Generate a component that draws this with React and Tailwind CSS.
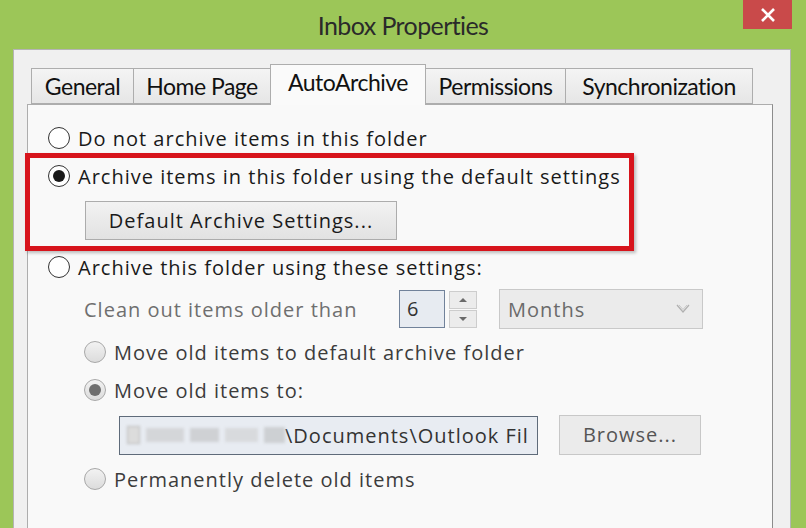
import React from 'react';

const font = "font-['Lato','Noto_Sans',sans-serif]";

function Radio({ checked, disabled }) {
  return (
    <div
      className={`w-[22px] h-[22px] rounded-full border-[1.5px] flex items-center justify-center shrink-0 ${
        disabled ? 'border-[#a8a8a8] bg-gradient-to-b from-[#f2f2f2] to-[#dcdcdc]' : 'border-[#333] bg-white'
      }`}
    >
      {checked && <div className={`w-[12px] h-[12px] rounded-full ${disabled ? 'bg-[#6e6e6e]' : 'bg-[#1a1a1a]'}`} />}
    </div>
  );
}

function Tab({ label, active, w }) {
  return (
    <div
      className={`flex items-center justify-center border border-[#adadad] ${
        active
          ? 'h-[41px] bg-[#fafafa] border-b-0 -mb-px z-10 relative pb-[6px]'
          : 'h-[36px] bg-gradient-to-b from-[#f4f4f4] to-[#e6e6e6] -ml-px first:ml-0'
      } ${w}`}
    >
      <span className="text-[23px] text-[#111] tracking-[-0.5px]">{label}</span>
    </div>
  );
}

export default function App() {
  return (
    <div className={`w-[806px] h-[528px] bg-[#9cc658] flex flex-col overflow-hidden ${font}`}>
      {/* title bar */}
      <div className="h-[49px] grid grid-cols-[1fr_auto_1fr] shrink-0">
        <div />
        <div className="pt-[7px] text-[25px] text-[#2a2a2a] tracking-[-0.6px]">Inbox Properties</div>
        <div className="flex justify-end pr-[14px]">
          <div className="w-[49px] h-[29px] bg-[#c94a4a] flex items-center justify-center">
            <svg width="16" height="16" viewBox="0 0 16 16">
              <path d="M2 2 L14 14 M14 2 L2 14" stroke="white" strokeWidth="2.6" />
            </svg>
          </div>
        </div>
      </div>

      {/* dialog body */}
      <div className="flex-1 ml-[13px] mr-[15px] bg-[#f0f0f0] border border-[#b4b4b4] border-b-0 pl-[13px] pr-[17px] pt-[14px] flex flex-col">
        <div className="flex items-end pl-[4px]">
          <Tab label="General" w="w-[103px]" />
          <Tab label="Home Page" w="w-[138px]" />
          <Tab label="AutoArchive" active w="w-[156px] -ml-px" />
          <Tab label="Permissions" w="w-[141px]" />
          <Tab label="Synchronization" w="w-[188px]" />
        </div>

        <div className="relative flex-1 bg-[#f9f9f9] border border-[#adadad] border-r-[#8c8c8c] border-b-0 pl-[20px] pt-[14px] text-[20px] tracking-[1px] text-[#1a1a1a] font-['Open_Sans',sans-serif]">
          {/* red highlight */}
          <div className="absolute left-[-3px] top-[48px] w-[609px] h-[98px] border-[5px] border-[#d7141c] shadow-[2px_2px_3px_rgba(0,0,0,0.25)] pointer-events-none" />

          <div className="h-[38px] flex items-center gap-[8px]">
            <Radio />
            <span className="pt-[2px]">Do not archive items in this folder</span>
          </div>
          <div className="h-[38px] flex items-center gap-[8px]">
            <Radio checked />
            <span className="pt-[2px]">Archive items in this folder using the default settings</span>
          </div>
          <div className="mt-[6px] ml-[37px] w-[312px] h-[39px] border border-[#acacac] bg-gradient-to-b from-[#f2f2f2] to-[#e2e2e2] flex items-center justify-center">
            Default Archive Settings...
          </div>
          <div className="mt-[8px] h-[38px] flex items-center gap-[8px]">
            <Radio />
            <span className="pt-[2px]">Archive this folder using these settings:</span>
          </div>

          <div className="mt-[3px] h-[40px] flex items-center pl-[36px]">
            <span className="w-[315px] text-[#6f6f6f] pt-[2px]">Clean out items older than</span>
            <div className="w-[46px] h-[38px] border border-[#71829a] bg-[#e7ebf1] flex items-center pl-[7px] text-[#333]">6</div>
            <div className="ml-[4px] flex flex-col gap-[1px]">
              <div className="w-[28px] h-[18px] border border-[#cdcdcd] bg-[#ececec] flex items-center justify-center">
                <svg width="10" height="6" viewBox="0 0 10 6"><path d="M1 5 L5 1 L9 5 Z" fill="#6a6a6a" /></svg>
              </div>
              <div className="w-[28px] h-[18px] border border-[#cdcdcd] bg-[#ececec] flex items-center justify-center">
                <svg width="10" height="6" viewBox="0 0 10 6"><path d="M1 1 L5 5 L9 1 Z" fill="#6a6a6a" /></svg>
              </div>
            </div>
            <div className="ml-[22px] w-[204px] h-[40px] border border-[#c9c9c9] bg-[#ebebeb] flex items-center justify-between pl-[8px] pr-[12px] text-[#6a6a6a]">
              <span className="pt-[2px]">Months</span>
              <svg width="14" height="10" viewBox="0 0 14 10">
                <path d="M1 1 L7 8 L13 1" stroke="#b0b0b0" strokeWidth="1.2" fill="none" />
                <path d="M3 1 L7 5.5 L11 1" stroke="#c8c8c8" strokeWidth="1" fill="none" />
              </svg>
            </div>
          </div>

          <div className="mt-[4px] h-[38px] flex items-center gap-[8px] pl-[36px] text-[#3c3c3c]">
            <Radio disabled />
            <span className="pt-[2px]">Move old items to default archive folder</span>
          </div>
          <div className="h-[38px] flex items-center gap-[8px] pl-[36px] text-[#3c3c3c]">
            <Radio checked disabled />
            <span className="pt-[2px]">Move old items to:</span>
          </div>

          <div className="mt-[6px] flex items-center pl-[71px]">
            <div className="w-[419px] h-[39px] border border-[#5f6b7a] bg-[#e8ecf2] flex items-center overflow-hidden text-[#333]">
              <div className="w-[165px] shrink-0 h-full flex items-center pl-[7px] gap-[6px] blur-[1.5px]">
                <div className="w-[13px] h-[18px] border border-[#b8b8b8] bg-[#dcdcdc]" />
                <div className="w-[40px] h-[14px] bg-[#d4d6d9]" />
                <div className="w-[30px] h-[14px] bg-[#cfd1d4]" />
                <div className="w-[34px] h-[14px] bg-[#d8dadd]" />
                <div className="w-[22px] h-[16px] bg-[#cdd0d3]" />
              </div>
              <span className="whitespace-nowrap pt-[2px]">\Documents\Outlook Fil</span>
            </div>
            <div className="ml-[21px] w-[142px] h-[40px] border border-[#c8c8c8] bg-[#ebebeb] flex items-center justify-center text-[#555]">
              Browse...
            </div>
          </div>

          <div className="mt-[5px] h-[38px] flex items-center gap-[8px] pl-[36px] text-[#3c3c3c]">
            <Radio disabled />
            <span className="pt-[2px]">Permanently delete old items</span>
          </div>
        </div>
      </div>
    </div>
  );
}
